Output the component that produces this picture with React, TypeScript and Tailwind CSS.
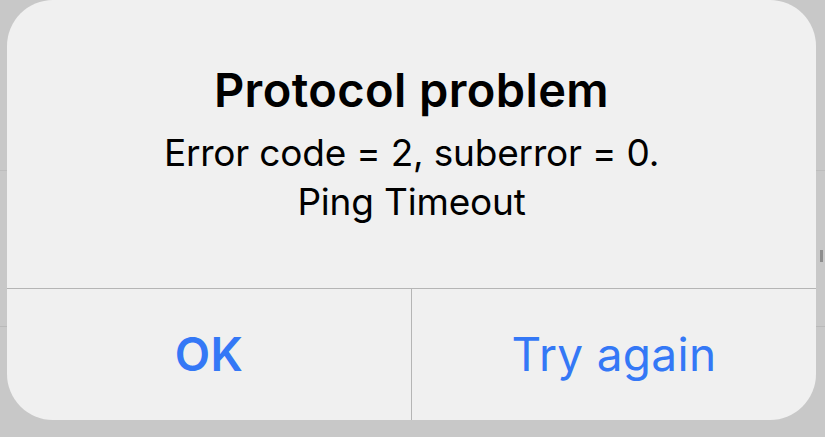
export default function App() {
  return (
    <div
      className="relative h-[437px] w-[825px] overflow-hidden bg-[#c8c8c8]"
      style={{ fontFamily: "Inter, 'Noto Sans', sans-serif" }}
    >
      {/* dimmed page behind the alert */}
      <div className="absolute left-0 top-[326px] h-px w-full bg-[#b9b9b9]" />
      <div className="absolute left-0 top-[170px] h-px w-full bg-[#bdbdbd]" />
      <div className="absolute right-[2px] top-[250px] h-[12px] w-[3px] bg-[#8e8e8e]" />

      <div className="relative ml-[7px] flex h-[420px] w-[809px] flex-col overflow-hidden rounded-[46px] bg-[#f0f0f0]">
        <div className="flex h-[288px] flex-col items-center pt-[62px] text-black">
          <h1 className="text-[47px] font-semibold leading-[56px] tracking-[0.4px]">
            Protocol problem
          </h1>
          <p className="mt-[10px] text-center text-[37px] leading-[49px] tracking-[-0.2px]">
            Error code = 2, suberror = 0.
            <br />
            Ping Timeout
          </p>
        </div>
        <div className="flex flex-1 border-t border-[#b5b5b5] text-[46px] leading-none tracking-[0.3px] text-[#3478f6]">
          <button className="flex flex-1 items-center justify-center pb-[2px] font-semibold">
            OK
          </button>
          <button className="flex flex-1 items-center justify-center border-l border-[#b5b5b5] pb-[2px]">
            Try again
          </button>
        </div>
      </div>
    </div>
  );
}
